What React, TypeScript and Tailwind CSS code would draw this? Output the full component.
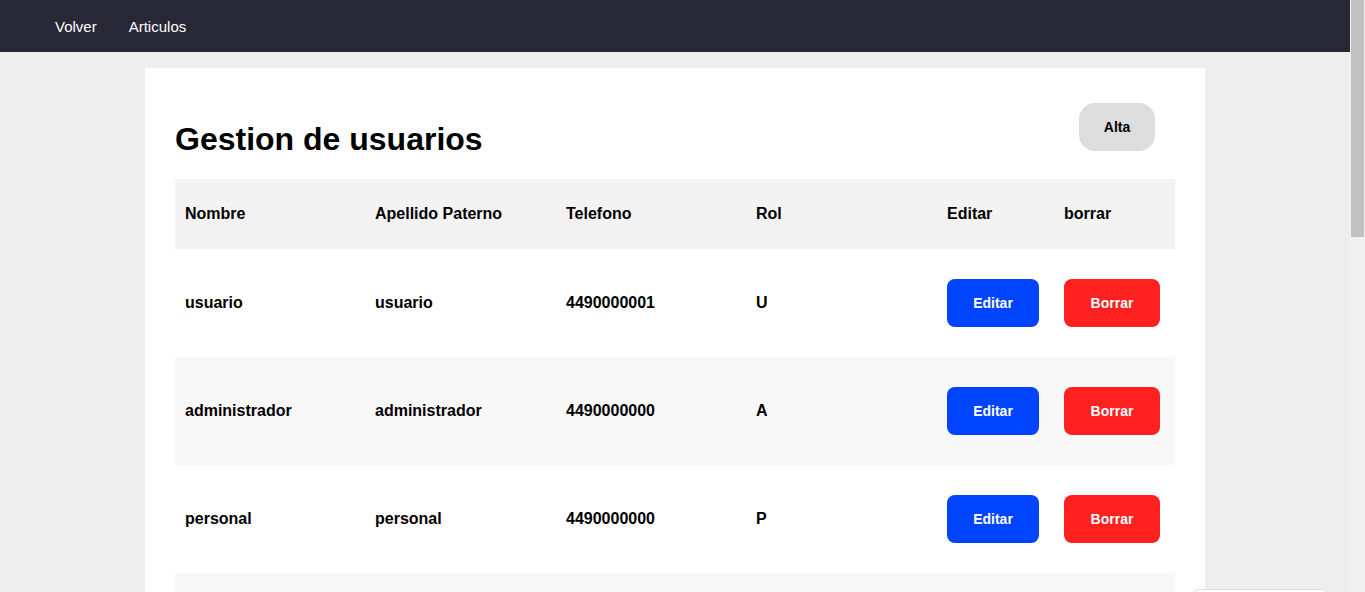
import React from 'react';

type Usuario = {
  nombre: string;
  apellido: string;
  telefono: string;
  rol: string;
};

const usuarios: Usuario[] = [
  { nombre: 'usuario', apellido: 'usuario', telefono: '4490000001', rol: 'U' },
  { nombre: 'administrador', apellido: 'administrador', telefono: '4490000000', rol: 'A' },
  { nombre: 'personal', apellido: 'personal', telefono: '4490000000', rol: 'P' },
  { nombre: 'juan', apellido: 'perez', telefono: '4490000002', rol: 'U' },
];

function NavBar() {
  return (
    <nav className="h-[52px] bg-[#272736] flex items-center pt-[3px] pl-[39px]">
      <a className="px-4 text-[15px] text-white cursor-pointer">Volver</a>
      <a className="px-4 text-[15px] text-white cursor-pointer">Articulos</a>
    </nav>
  );
}

// barra de desplazamiento clasica del navegador
function ScrollBar() {
  return (
    <div className="fixed right-0 top-0 h-screen w-[15px] bg-[#f1f1f1]">
      <div className="mx-auto w-[13px] h-[237px] bg-[#c1c1c1]" />
    </div>
  );
}

export default function App() {
  return (
    <div className="min-h-screen bg-[#eeeeee] font-['Liberation_Sans',Arial,sans-serif] text-black">
      <div className="w-[1350px]">
        <NavBar />

        <main className="w-[1060px] mx-auto mt-4 mb-4 bg-white p-[30px]">
          {/* Cabecera: titulo y boton de alta */}
          <div className="flex justify-between items-start">
            <h1 className="mt-[23px] text-[32px] leading-[37px] font-bold">Gestion de usuarios</h1>
            <button className="mt-[5px] mr-5 w-[76px] h-12 rounded-2xl bg-[#dddddd] text-sm font-bold">
              Alta
            </button>
          </div>

          <table className="mt-[21px] w-[1000px] table-fixed border-collapse text-base font-bold">
            <colgroup>
              <col className="w-[190px]" />
              <col className="w-[191px]" />
              <col className="w-[190px]" />
              <col className="w-[191px]" />
              <col className="w-[117px]" />
              <col className="w-[121px]" />
            </colgroup>
            <thead>
              <tr className="h-[70px] bg-[#f3f3f3] text-left">
                <th className="px-[10px]">Nombre</th>
                <th className="px-[10px]">Apellido Paterno</th>
                <th className="px-[10px]">Telefono</th>
                <th className="px-[10px]">Rol</th>
                <th className="px-[10px]">Editar</th>
                <th className="px-[10px]">borrar</th>
              </tr>
            </thead>
            <tbody>
              {usuarios.map((u, i) => (
                <tr key={i} className={'h-[108px] ' + (i % 2 === 1 ? 'bg-[#f8f8f8]' : 'bg-white')}>
                  <td className="px-[10px]">{u.nombre}</td>
                  <td className="px-[10px]">{u.apellido}</td>
                  <td className="px-[10px]">{u.telefono}</td>
                  <td className="px-[10px]">{u.rol}</td>
                  <td className="px-[10px]">
                    <button className="w-[92px] h-12 rounded-lg bg-[#0044ff] text-white text-sm font-bold">
                      Editar
                    </button>
                  </td>
                  <td className="px-[10px]">
                    <button className="w-[96px] h-12 rounded-lg bg-[#ff2020] text-white text-sm font-bold">
                      Borrar
                    </button>
                  </td>
                </tr>
              ))}
            </tbody>
          </table>
        </main>
      </div>

      <ScrollBar />

      {/* aviso flotante abajo a la derecha */}
      <div className="fixed left-[1193px] top-[589px] w-[134px] h-10 bg-white border border-[#dddddd] rounded-md" />
    </div>
  );
}
